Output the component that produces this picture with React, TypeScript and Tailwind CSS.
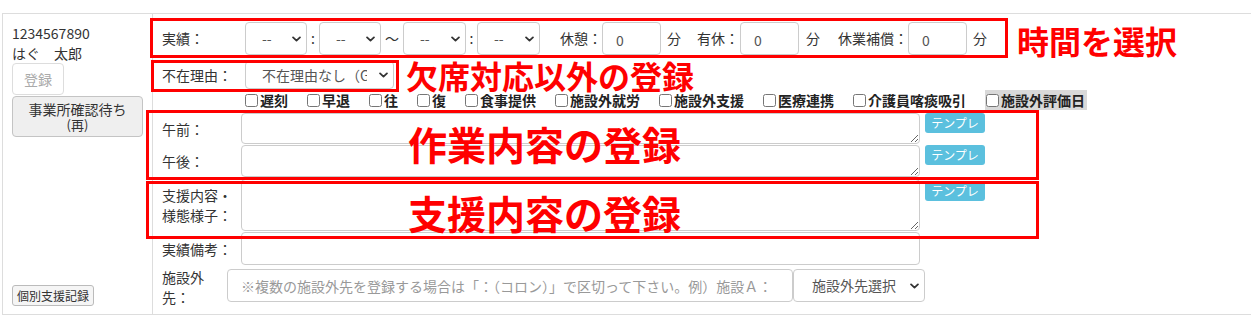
import type { ReactNode } from "react";

const FONT = "font-['Noto_Sans_CJK_JP','Noto_Sans',sans-serif]";

function Chevron({ className }: { className: string }) {
  return (
    <svg
      viewBox="0 0 10 6"
      className={`pointer-events-none absolute top-1/2 -translate-y-1/2 w-[9px] h-[6px] ${className}`}
      fill="none"
      stroke="#333"
      strokeWidth={2}
      strokeLinecap="round"
      strokeLinejoin="round"
    >
      <path d="M1.2 1.2 5 4.8 8.8 1.2" />
    </svg>
  );
}

function Select({ w, h, text, pl = "pl-[16px]" }: { w: string; h: string; text: string; pl?: string }) {
  return (
    <div className={`relative shrink-0 ${w} ${h}`}>
      <select
        className={`appearance-none w-full h-full rounded-[4px] border border-[#ccc] bg-white ${pl} pr-[26px] text-[14px] text-[#555] outline-none overflow-hidden`}
        defaultValue={text}
      >
        <option>{text}</option>
      </select>
      <Chevron className="right-[6px]" />
    </div>
  );
}

function NumInput() {
  return (
    <input
      defaultValue="0"
      className="w-[59px] h-[33px] shrink-0 rounded-[4px] border border-[#ccc] bg-white pl-[13px] pt-[3px] text-[14px] text-[#555] outline-none"
    />
  );
}

function Templ() {
  return (
    <button className="ml-[5px] w-[60px] h-[20px] shrink-0 rounded-[3px] bg-[#5bc0de] text-[12px] leading-[20px] text-white">
      テンプレ
    </button>
  );
}

function Check({ label, shaded }: { label: string; shaded?: boolean }) {
  return (
    <label
      className={`flex items-center h-[20px] font-bold text-[14px] leading-[18px] text-[#222] whitespace-nowrap ${
        shaded ? "bg-[#d9d9d9] pl-[1px] pr-[2px]" : "mr-[19px]"
      }`}
    >
      <input type="checkbox" className="m-0 mr-[2px] w-[13px] h-[13px] shrink-0" />
      <span>{label}</span>
    </label>
  );
}

function Row({ label, children, className = "" }: { label: ReactNode; children: ReactNode; className?: string }) {
  return (
    <div className={`flex ${className}`}>
      <div className="w-[79px] shrink-0 flex items-center leading-[20px]">{label}</div>
      {children}
    </div>
  );
}

const CHECKS = ["遅刻", "早退", "往", "復", "食事提供", "施設外就労", "施設外支援", "医療連携", "介護員喀痰吸引"];

export default function App() {
  return (
    <div className={`relative w-[1251px] h-[330px] bg-white pt-[13px] text-[14px] text-[#333] ${FONT}`}>
      <div className="ml-[2px] w-[1249px] flex border-y border-[#ddd]">
        {/* left cell */}
        <div className="w-[151px] shrink-0 border-x border-[#ddd] pt-[9px] pl-[9px] pb-[8px] flex flex-col items-start">
          <div className="leading-[20px]">1234567890</div>
          <div className="leading-[20px]">はぐ　太郎</div>
          <button className="w-[52px] h-[32px] rounded-[4px] border border-[#ddd] bg-white text-[#aaa]">登録</button>
          <button className="mt-[1px] w-[131px] h-[41px] rounded-[4px] border border-[#c4c4c4] bg-[#efefef] text-[#333] flex flex-col items-center justify-center">
            <span className="block leading-[15px]">事業所確認待ち</span>
            <span className="block leading-[15px] text-[13px]">(再)</span>
          </button>
          <div className="flex-1" />
          <button className="w-[82px] h-[21px] rounded-[3px] border border-[#bbb] bg-[#f5f5f5] text-[12px] leading-[19px] text-[#333]">
            個別支援記録
          </button>
        </div>

        {/* right cell */}
        <div className="flex-1 pt-[8px] pl-[9px] pb-[7px]">
          <div className="flex items-center h-[33px]">
            <div className="w-[83px] shrink-0">実績：</div>
            <Select w="w-[62px]" h="h-[33px]" text="--" />
            <span className="w-[12px] text-center">:</span>
            <Select w="w-[62px]" h="h-[33px]" text="--" />
            <span className="w-[22px] text-center">〜</span>
            <Select w="w-[63px]" h="h-[33px]" text="--" />
            <span className="w-[11px] text-center">:</span>
            <Select w="w-[63px]" h="h-[33px]" text="--" />
            <span className="ml-[20px]">休憩：</span>
            <NumInput />
            <span className="ml-[6px]">分</span>
            <span className="ml-[16px] mr-[1px]">有休：</span>
            <NumInput />
            <span className="ml-[7px]">分</span>
            <span className="ml-[18px]">休業補償：</span>
            <NumInput />
            <span className="ml-[6px]">分</span>
          </div>

          <div className="mt-[6px] flex items-center h-[28px]">
            <div className="w-[83px] shrink-0">不在理由：</div>
            <Select w="w-[149px]" h="h-[28px]" text="不在理由なし（GH）" />
          </div>

          <div className="mt-[1px] flex items-center pl-[83px]">
            {CHECKS.map((c) => (
              <Check key={c} label={c} />
            ))}
            <Check label="施設外評価日" shaded />
          </div>

          <Row label="午前：" className="mt-[3px]">
            <textarea className="w-[679px] h-[31px] rounded-[4px] border border-[#ccc] bg-white outline-none" />
            <Templ />
          </Row>
          <Row label="午後：" className="mt-[1px]">
            <textarea className="w-[679px] h-[32px] rounded-[4px] border border-[#ccc] bg-white outline-none" />
            <Templ />
          </Row>
          <Row
            label={
              <div>
                支援内容・
                <br />
                様態様子：
              </div>
            }
            className="mt-[2px]"
          >
            <textarea className="w-[679px] h-[52px] rounded-[4px] border border-[#ccc] bg-white outline-none" />
            <div className="mt-[1px]">
              <Templ />
            </div>
          </Row>
          <Row label="実績備考：" className="mt-[1px]">
            <input className="w-[679px] h-[33px] rounded-[4px] border border-[#ccc] bg-white outline-none" />
          </Row>

          <div className="mt-[2px] flex items-start">
            <div className="w-[52px] mr-[13px] shrink-0 leading-[20px]">施設外先：</div>
            <input
              placeholder="※複数の施設外先を登録する場合は「：（コロン）」で区切って下さい。例）施設Ａ："
              className="mt-[2px] w-[566px] h-[33px] rounded-[4px] border border-[#ccc] bg-white pl-[13px] pr-[8px] text-[14px] outline-none placeholder:text-[#999]"
            />
            <div className="mt-[2px]">
              <Select w="w-[132px]" h="h-[33px]" text="施設外先選択" pl="pl-[18px]" />
            </div>
          </div>
        </div>
      </div>

      {/* annotations drawn over the form */}
      <div className="pointer-events-none absolute left-[150px] top-[18px] w-[858px] h-[40px] border-[3px] border-[#ff0000]" />
      <div className="pointer-events-none absolute left-[151px] top-[60px] w-[248px] h-[32px] border-[3px] border-[#ff0000]" />
      <div className="pointer-events-none absolute left-[146px] top-[110px] w-[893px] h-[70px] border-[3px] border-[#ff0000]" />
      <div className="pointer-events-none absolute left-[146px] top-[181px] w-[893px] h-[58px] border-[3px] border-[#ff0000]" />
      <div className="absolute left-[1017px] top-[24px] text-[32px] leading-none font-bold text-[#ff0000] whitespace-nowrap">時間を選択</div>
      <div className="absolute left-[406px] top-[60px] text-[32px] leading-[30px] font-bold text-[#ff0000] whitespace-nowrap">欠席対応以外の登録</div>
      <div className="absolute left-[408px] top-[124px] text-[39px] leading-none font-bold text-[#ff0000] whitespace-nowrap">作業内容の登録</div>
      <div className="absolute left-[408px] top-[193px] text-[39px] leading-none font-bold text-[#ff0000] whitespace-nowrap">支援内容の登録</div>
    </div>
  );
}
